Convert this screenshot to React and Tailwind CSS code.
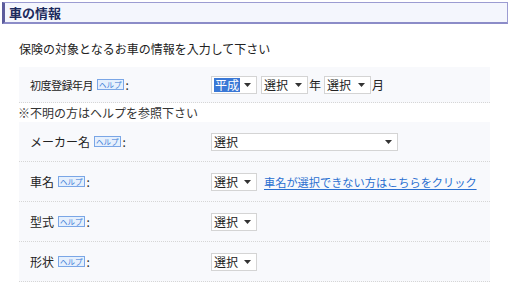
import React from 'react';

const font = { fontFamily: '"Noto Sans CJK JP", "Noto Sans", sans-serif' };

const Help = () => (
  <span className="inline-flex items-center justify-center h-[11px] px-[1px] border border-[#7aa6e6] bg-[#e6f0fd] text-[#3b7bd6] text-[7.5px] leading-none whitespace-nowrap ml-[4px]">
    ヘルプ
  </span>
);

const Arrow = () => (
  <svg width="7" height="4" viewBox="0 0 7 4" className="shrink-0">
    <path d="M0 0h7L3.5 4z" fill="#333" />
  </svg>
);

const Select = ({ w, label = '選択', active = false }) => (
  <div
    className={`flex items-center justify-between h-[18px] border border-[#d4d4d4] bg-white pl-[2px] pr-[5px] ${w}`}
  >
    {active ? (
      <span className="bg-[#3a78d6] text-white px-[1px] leading-[14px]">{label}</span>
    ) : (
      <span className="leading-[14px] text-[#222]">{label}</span>
    )}
    <Arrow />
  </div>
);

const Row = ({ label, labelCls = '', children, h = 'h-[40px]' }) => (
  <div className={`flex items-center ${h} bg-[#f8f9fc] border-b border-dotted border-[#d6d6d6]`}>
    <div className="w-[192px] pl-[11px] flex items-center text-[#222]">
      <span className={labelCls}>{label}</span>
      <Help />
      <span className="ml-[2px]">:</span>
    </div>
    <div className="flex items-center">{children}</div>
  </div>
);

export default function App() {
  return (
    <div className="w-[513px] h-[286px] bg-white overflow-hidden text-[12px] leading-[14px]" style={font}>
      <div className="ml-[2px] mt-[2px] w-[506px] h-[22px] flex items-center bg-[#f4f6fd] border-t border-r border-[#9c9cd2] border-b-2 border-b-[#8c8cc8] border-l-[3px] border-l-[#5c5c9c]">
        <span className="pl-[4px] text-[13px] font-bold text-[#1c2a5c]">車の情報</span>
      </div>

      <div className="ml-[19px] mt-[18px] text-[#222]">保険の対象となるお車の情報を入力して下さい</div>

      <div className="ml-[19px] w-[471px] mt-[11px]">
        <Row label="初度登録年月" labelCls="text-[11px] tracking-[-0.5px]" h="h-[36px]">
          <Select w="w-[46px]" label="平成" active />
          <div className="ml-[4px]">
            <Select w="w-[47px]" />
          </div>
          <span className="ml-[1px] text-[#222]">年</span>
          <div className="ml-[3px]">
            <Select w="w-[47px]" />
          </div>
          <span className="ml-[1px] text-[#222]">月</span>
        </Row>

        <div className="h-[19px] flex items-center -ml-[1px] text-[#333]">※不明の方はヘルプを参照下さい</div>

        <Row label="メーカー名">
          <Select w="w-[187px]" />
        </Row>
        <Row label="車名">
          <Select w="w-[46px]" />
          <a href="#" className="ml-[7px] text-[#2a6fd0] text-[11.2px] underline underline-offset-2 whitespace-nowrap">
            車名が選択できない方はこちらをクリック
          </a>
        </Row>
        <Row label="型式">
          <Select w="w-[46px]" />
        </Row>
        <Row label="形状">
          <Select w="w-[46px]" />
        </Row>
      </div>
    </div>
  );
}
